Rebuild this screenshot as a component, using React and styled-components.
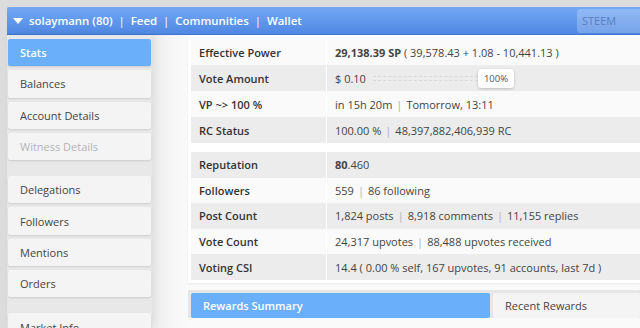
import React from 'react';
import styled, { createGlobalStyle } from 'styled-components';

const Global = createGlobalStyle`
  html, body {
    margin: 0;
    padding: 0;
    background: #dcdcdc;
    font-family: "Open Sans", "Noto Sans", sans-serif;
    font-size: 11px;
    color: #444;
    overflow: hidden;
  }
`;

const Page = styled.div`
  padding: 7px 0 0 7px;
  height: 328px;
  box-sizing: border-box;
  overflow: hidden;
`;

const TopBar = styled.div`
  height: 27px;
  display: flex;
  align-items: center;
  justify-content: space-between;
  background: linear-gradient(#74a8f6, #4f88e2);
  border-bottom: 1px solid #3d74d2;
  border-radius: 2px 0 0 0;
  color: #fff;
  font-weight: 600;
  font-size: 11.4px;
`;

const Nav = styled.div`
  display: flex;
  align-items: center;
  padding-left: 6px;
`;

const Caret = styled.span`
  width: 0;
  height: 0;
  border-left: 5px solid transparent;
  border-right: 5px solid transparent;
  border-top: 6px solid #fff;
  margin-right: 6px;
`;

const Sep = styled.span`
  margin: 0 6px;
  font-weight: 400;
`;

const Search = styled.div`
  width: 65px;
  height: 24px;
  margin-right: -2px;
  padding-left: 5px;
  box-sizing: border-box;
  display: flex;
  align-items: center;
  background: rgba(255, 255, 255, 0.22);
  border-radius: 3px 0 0 3px;
  color: #5b7fbd;
  font-weight: 400;
  font-size: 11px;
`;

const Body = styled.div`
  display: flex;
  background: linear-gradient(90deg, #ececec 145px, #f6f6f6 165px, #fafafa 181px);
  height: 293px;
`;

const Sidebar = styled.div`
  width: 145px;
  flex: none;
  background: #e8e8e8;
  padding: 4px 1px 0 1px;
  box-sizing: border-box;
  display: flex;
  flex-direction: column;
  gap: 4px;
  box-shadow: 3px 0 8px rgba(0, 0, 0, 0.06);
`;

const NavButton = styled.div`
  height: 27.3px;
  flex: none;
  display: flex;
  align-items: center;
  padding-left: 12px;
  border-radius: 2px;
  background: ${p => (p.$active ? '#69affa' : '#f4f4f4')};
  color: ${p => (p.$active ? '#fff' : p.$disabled ? '#b4b4b4' : '#444')};
  font-weight: ${p => (p.$active ? 600 : 400)};
  box-shadow: 0 1px 2px rgba(0, 0, 0, 0.12);
`;

const Spacer = styled.div`
  height: 8px;
  flex: none;
`;

const Main = styled.div`
  flex: 1;
  margin-left: 36px;
  display: flex;
  flex-direction: column;
`;

const Panel = styled.div`
  background: #fff;
  padding: 4px 0 3px 3px;
  box-shadow: 0 1px 2px rgba(0, 0, 0, 0.08);
`;

const Table = styled.div`
  display: grid;
  grid-template-columns: 135px 1fr;
  column-gap: 1px;
  margin-bottom: ${p => (p.$gap ? '9px' : '0')};
`;

const Cell = styled.div`
  height: ${p => p.$h}px;
  display: flex;
  align-items: center;
  padding-left: 8px;
  white-space: nowrap;
  background: ${p => (p.$odd ? '#ececec' : '#fafafa')};
  color: ${p => (p.$label ? '#333' : '#444')};
  font-weight: ${p => (p.$label ? 600 : 400)};
`;

const Bar = styled.span`
  color: #b0b0b0;
  margin: 0 4px;
`;

const Slider = styled.span`
  display: inline-flex;
  align-items: center;
  margin-left: 7px;
`;

const Track = styled.span`
  width: 105px;
  height: 3px;
  border: 1px dashed #dadada;
  border-width: 1px 0;
`;

const Thumb = styled.span`
  font-size: 9.5px;
  color: #555;
  background: #fff;
  border-radius: 3px;
  padding: 3px 6px;
  box-shadow: 0 1px 3px rgba(0, 0, 0, 0.2);
`;

const Tabs = styled.div`
  margin-top: 7px;
  background: #e6e6e6;
  padding: 3px 0 0 3px;
  display: flex;
  gap: 3px;
`;

const Tab = styled.div`
  height: 25px;
  display: flex;
  align-items: center;
  padding-left: 12px;
  border-radius: 2px;
  flex: ${p => (p.$active ? '0 0 287px' : '1')};
  background: ${p => (p.$active ? '#69affa' : '#f4f4f4')};
  color: ${p => (p.$active ? '#fff' : '#444')};
  font-weight: ${p => (p.$active ? 600 : 400)};
`;

const menu = [
  { name: 'Stats', active: true },
  { name: 'Balances' },
  { name: 'Account Details' },
  { name: 'Witness Details', disabled: true },
  null,
  { name: 'Delegations' },
  { name: 'Followers' },
  { name: 'Mentions' },
  { name: 'Orders' },
  null,
  { name: 'Market Info' },
];

const sep = <Bar>|</Bar>;

const first = [
  ['Effective Power', <><b>29,138.39 SP</b>&nbsp;( 39,578.43 + 1.08 - 10,441.13 )</>],
  ['Vote Amount', <>$ 0.10<Slider><Track /><Thumb>100%</Thumb></Slider></>],
  ['VP ~> 100 %', <>in 15h 20m{sep}Tomorrow, 13:11</>],
  ['RC Status', <>100.00 %{sep}48,397,882,406,939 RC</>],
];

const second = [
  ['Reputation', <><b>80</b>.460</>],
  ['Followers', <>559{sep}86 following</>],
  ['Post Count', <>1,824 posts{sep}8,918 comments{sep}11,155 replies</>],
  ['Vote Count', <>24,317 upvotes{sep}88,488 upvotes received</>],
  ['Voting CSI', <>14.4 ( 0.00 % self, 167 upvotes, 91 accounts, last 7d )</>],
];

const StatTable = ({ rows, h, startOdd, gap }) => (
  <Table $gap={gap}>
    {rows.map(([label, value], i) => {
      const odd = (i % 2 === 1) !== startOdd;
      return (
        <React.Fragment key={label}>
          <Cell $label $odd={odd} $h={h}>{label}</Cell>
          <Cell $odd={odd} $h={h}>{value}</Cell>
        </React.Fragment>
      );
    })}
  </Table>
);

const App = () => (
  <Page>
    <Global />
    <TopBar>
      <Nav>
        <Caret />
        solaymann (80)<Sep>|</Sep>Feed<Sep>|</Sep>Communities<Sep>|</Sep>Wallet
      </Nav>
      <Search>STEEM</Search>
    </TopBar>
    <Body>
      <Sidebar>
        {menu.map((m, i) =>
          m ? (
            <NavButton key={m.name} $active={m.active} $disabled={m.disabled}>
              {m.name}
            </NavButton>
          ) : (
            <Spacer key={'s' + i} />
          )
        )}
      </Sidebar>
      <Main>
        <Panel>
          <StatTable rows={first} h={26} startOdd={false} gap />
          <StatTable rows={second} h={25.6} startOdd={true} />
        </Panel>
        <Tabs>
          <Tab $active>Rewards Summary</Tab>
          <Tab>Recent Rewards</Tab>
        </Tabs>
      </Main>
    </Body>
  </Page>
);

export default App;
